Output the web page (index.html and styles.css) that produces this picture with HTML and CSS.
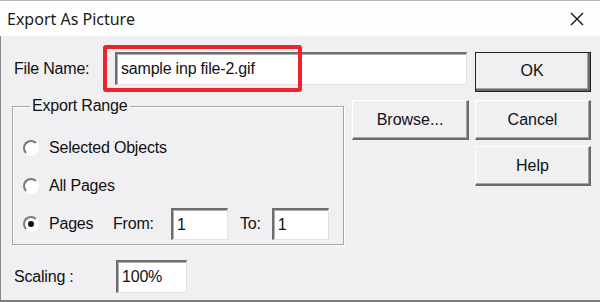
FILE: index.html
```html
<!DOCTYPE html>
<html lang="en">
<head>
    <meta charset="UTF-8">
    <title>Export As Picture</title>
    <link rel="stylesheet" href="styles.css">
</head>
<body>
<div class="dialog">
    <div class="titlebar">
        <span class="title">Export As Picture</span>
        <svg class="close" width="14" height="14" viewBox="0 0 14 14">
            <path d="M1 1 L13 13 M13 1 L1 13" stroke="#111" stroke-width="1.4" fill="none"/>
        </svg>
    </div>
    <div class="content">
        <div class="left">
            <div class="file-row">
                <label class="file-label">File Name:</label>
                <div class="field file-input">sample inp file-2.gif</div>
                <div class="highlight"></div>
            </div>
            <div class="mid-row">
                <fieldset class="range">
                    <legend>Export Range</legend>
                    <div class="option"><span class="radio"></span>Selected Objects</div>
                    <div class="option"><span class="radio"></span>All Pages</div>
                    <div class="option pages">
                        <span class="radio checked"></span>
                        <span class="pages-label">Pages</span>
                        <span class="from-label">From:</span>
                        <div class="field page-input">1</div>
                        <span class="to-label">To:</span>
                        <div class="field page-input">1</div>
                    </div>
                </fieldset>
                <button class="btn browse">Browse...</button>
            </div>
            <div class="scaling-row">
                <label class="scaling-label">Scaling :</label>
                <div class="field scaling-input">100%</div>
            </div>
        </div>
        <div class="right">
            <button class="btn default">OK</button>
            <button class="btn cancel">Cancel</button>
            <button class="btn help">Help</button>
        </div>
    </div>
</div>
</body>
</html>
```

FILE: styles.css
```css
body {
    margin: 0;
    font: 16px "Liberation Sans", Arial, sans-serif;
    letter-spacing: -0.2px;
    color: #111;
    background: #f0eff2;
}

.dialog {
    width: 600px;
    height: 302px;
    box-sizing: border-box;
    border-bottom: 2px solid #7c7c7c;
    background: #f0eff2;
    overflow: hidden;
}

.titlebar {
    height: 36px;
    box-sizing: border-box;
    border-top: 1px solid #b8b8b8;
    background: #fefefe;
    display: flex;
    align-items: center;
    justify-content: space-between;
    padding: 0 16px 0 7px;
}

.title {
    font: 16px "Noto Sans", sans-serif;
    letter-spacing: 0;
    color: #1a1a1a;
}

.content {
    display: flex;
    height: 264px;
    border-left: 1px solid #8a8a8a;
}

.left {
    width: 461px;
    padding-left: 13px;
}

.file-row {
    position: relative;
    display: flex;
    align-items: center;
    margin-top: 16px;
}

.file-label {
    width: 101px;
}

.field {
    box-sizing: border-box;
    background: #fff;
    border-top: 2px solid #6d6d6d;
    border-left: 2px solid #6d6d6d;
    border-right: 1px solid #e2e2e2;
    border-bottom: 1px solid #e2e2e2;
    box-shadow: inset 1px 1px 0 #b0b0b0;
    padding-left: 4px;
    display: flex;
    align-items: center;
}

.file-input {
    width: 352px;
    height: 33px;
}

.highlight {
    position: absolute;
    left: 89px;
    top: -7px;
    width: 199px;
    height: 47px;
    box-sizing: border-box;
    border: 4px solid #ee2328;
    border-radius: 3px;
}

.mid-row {
    display: flex;
    align-items: flex-start;
    margin-top: 15px;
}

.range {
    margin: -1px 0 0 -2px;
    padding: 0 0 0 10px;
    width: 332px;
    height: 146px;
    box-sizing: border-box;
    border: 1px solid #a6a6a6;
    box-shadow: inset 1px 1px 0 #fff, 1px 1px 0 #fff;
}

.range legend {
    margin-left: 7px;
    padding: 0 3px 0 2px;
    line-height: 14px;
}

.option {
    display: flex;
    align-items: center;
    height: 38px;
}

.option:first-of-type {
    margin-top: 16px;
}

.radio {
    width: 16px;
    height: 16px;
    box-sizing: border-box;
    border-radius: 50%;
    border: 2px solid;
    border-color: #7a7a7a #fff #fff #7a7a7a;
    background: #fff;
    margin-right: 10px;
    position: relative;
}

.radio.checked::after {
    content: "";
    position: absolute;
    left: 3px;
    top: 3px;
    width: 6px;
    height: 6px;
    border-radius: 50%;
    background: #111;
}

.pages-label {
    width: 64px;
}

.from-label {
    width: 58px;
}

.page-input {
    width: 57px;
    height: 32px;
}

.to-label {
    margin: 0 11px 0 12px;
}

.btn {
    box-sizing: border-box;
    font: inherit;
    color: #111;
    background: #f0eff2;
    border-top: 1px solid #fff;
    border-left: 1px solid #fff;
    border-right: 2px solid #6a6a6a;
    border-bottom: 2px solid #6a6a6a;
    box-shadow: inset -1px -1px 0 #a8a8a8;
    padding: 0;
}

.browse {
    width: 117px;
    height: 40px;
    margin-left: 8px;
}

.scaling-row {
    display: flex;
    align-items: center;
    margin-top: 15px;
}

.scaling-label {
    width: 102px;
}

.scaling-input {
    width: 71px;
    height: 33px;
}

.right {
    display: flex;
    flex-direction: column;
    margin-top: 16px;
    margin-left: 0;
}

.right .btn {
    width: 116px;
    height: 40px;
}

.default {
    outline: 1px solid #222;
    outline-offset: -1px;
    border-right-width: 3px;
    border-bottom-width: 3px;
}

.cancel {
    margin-top: 8px;
}

.help {
    margin-top: 6px;
    height: 41px;
}
```
